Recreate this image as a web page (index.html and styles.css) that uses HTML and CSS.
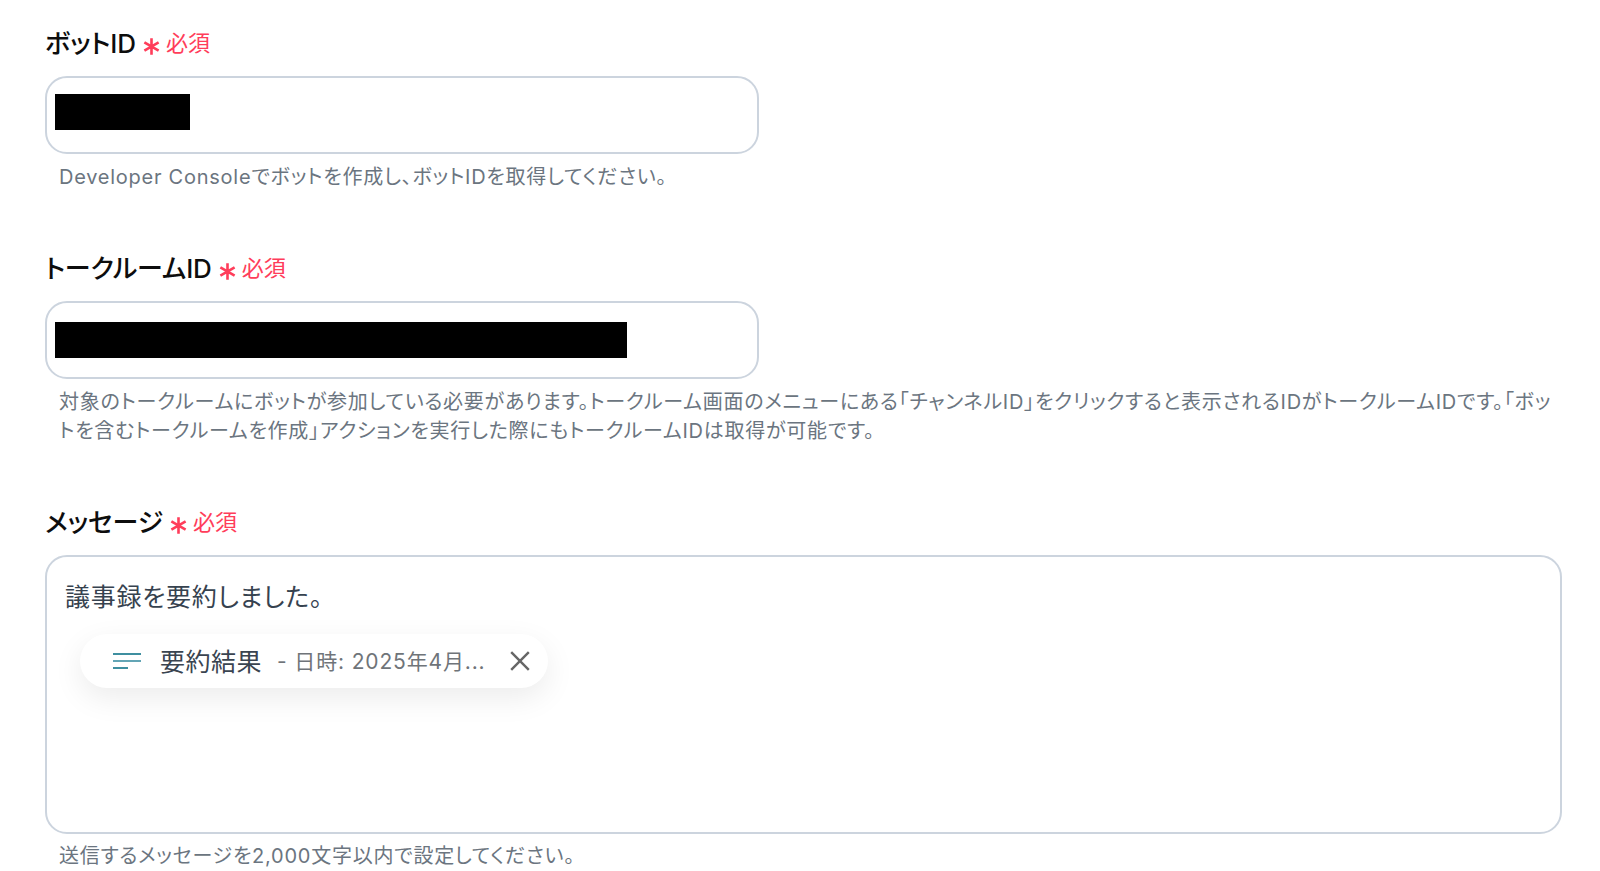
FILE: index.html
```html
<!DOCTYPE html>
<html lang="ja">
<head>
<meta charset="utf-8">
<title>フォーム</title>
<link rel="stylesheet" href="styles.css">
</head>
<body>
<main class="form">
  <section class="field">
    <div class="label"><span class="label-text">ボットID</span><svg class="star" viewBox="0 0 16 16"><path d="M8 1v14M2 4.5l12 7M14 4.5l-12 7"/></svg><span class="req">必須</span></div>
    <div class="box box-input"><div class="redact redact-short"></div></div>
    <p class="hint">Developer Consoleでボットを作成し、ボットIDを取得してください。</p>
  </section>
  <section class="field">
    <div class="label"><span class="label-text">トークルームID</span><svg class="star" viewBox="0 0 16 16"><path d="M8 1v14M2 4.5l12 7M14 4.5l-12 7"/></svg><span class="req">必須</span></div>
    <div class="box box-input"><div class="redact redact-long"></div></div>
    <p class="hint">対象のトークルームにボットが参加している必要があります。トークルーム画面のメニューにある「チャンネルID」をクリックすると表示されるIDがトークルームIDです。「ボットを含むトークルームを作成」アクションを実行した際にもトークルームIDは取得が可能です。</p>
  </section>
  <section class="field">
    <div class="label"><span class="label-text">メッセージ</span><svg class="star" viewBox="0 0 16 16"><path d="M8 1v14M2 4.5l12 7M14 4.5l-12 7"/></svg><span class="req">必須</span></div>
    <div class="box box-area">
      <div class="area-text">議事録を要約しました。</div>
      <div class="chip">
        <svg class="chip-icon" viewBox="0 0 28 18"><path class="l1" d="M0 2h28"/><path class="l2" d="M0 9h28"/><path class="l3" d="M0 16h15"/></svg>
        <span class="chip-name">要約結果</span>
        <span class="chip-sub">- 日時: 2025年4月...</span>
        <svg class="chip-x" viewBox="0 0 20 20"><path d="M2 2l16 16M18 2L2 18"/></svg>
      </div>
    </div>
    <p class="hint hint-tight">送信するメッセージを2,000文字以内で設定してください。</p>
  </section>
</main>
</body>
</html>
```
FILE: styles.css
```css
* { box-sizing: border-box; }
html, body { margin: 0; height: 100%; background: #fff; overflow: hidden; }
body {
  font-family: Inter, "Noto Sans CJK JP", sans-serif;
  font-feature-settings: "palt";
  color: #000;
}
.form { padding: 28px 38px 0 45px; }
.field { margin-bottom: 61px; }
.field:last-child { margin-bottom: 0; }
.label { display: flex; align-items: center; height: 26px; margin-bottom: 22px; }
.label-text { font-size: 26px; font-weight: 500; color: #0d0d0d; letter-spacing: -0.1px; }
.star { width: 19px; height: 19px; margin: 10px 5px 0 6px; fill: none; stroke: #ff3d5a; stroke-width: 2.2; }
.req { font-size: 22px; color: #ff3d5a; }
.box { background: #fff; border: 2px solid #ccd4de; border-radius: 22px; }
.box-input { width: 714px; height: 78px; padding: 16px 8px; }
.box-area { height: 279px; padding: 22px 18px; }
.redact { height: 36px; background: #000; }
.redact-short { width: 135px; }
.redact-long { width: 572px; margin-top: 3px; }
.hint {
  margin: 9px 0 0;
  padding-left: 14px;
  font-size: 20px;
  line-height: 29px;
  letter-spacing: 0.75px;
  color: #6b7580;
}
.hint-tight { margin-top: 8px; }
.area-text { font-size: 25px; line-height: 36px; color: #36424f; letter-spacing: 0.75px; }
.chip {
  display: flex;
  align-items: center;
  width: 468px;
  height: 54px;
  margin: 19px 0 0 15px;
  padding: 0 17px 0 33px;
  background: #fff;
  border-radius: 27px;
  box-shadow: 0 10px 30px rgba(0, 0, 0, 0.08);
}
.chip-icon { width: 28px; height: 18px; flex: none; fill: none; stroke-width: 1.6; }
.l1, .l3 { stroke: #0f7389; }
.l2 { stroke: #3d8fa3; }
.chip-name { margin: 0 0 3px 19px; font-size: 25px; color: #3a4450; letter-spacing: 0.5px; }
.chip-sub { margin: 0 0 3px 15px; font-size: 21px; color: #6f7479; letter-spacing: 0.85px; white-space: nowrap; }
.chip-x { width: 22px; height: 22px; margin-left: auto; flex: none; fill: none; stroke: #666; stroke-width: 2.2; }
```
